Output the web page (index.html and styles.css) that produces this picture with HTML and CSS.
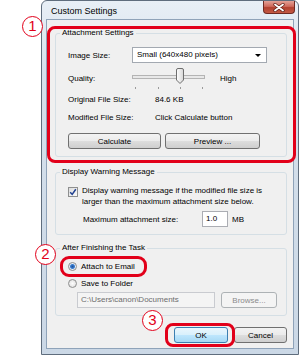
FILE: index.html
```html
<!DOCTYPE html>
<html>
<head>
  <title>Custom Settings</title>
  <link rel="stylesheet" href="styles.css">
</head>
<body>
  <div class="page">
    <div class="window">
      <div class="titlebar">
        <span class="title">Custom Settings</span>
        <span class="close">
          <svg width="12" height="9" viewBox="0 0 12 9">
            <path d="M2 1.5 L10 7.5 M10 1.5 L2 7.5" stroke="#5a1a12" stroke-width="3.2" stroke-linecap="round"/>
            <path d="M2 1.5 L10 7.5 M10 1.5 L2 7.5" stroke="#fff" stroke-width="1.8" stroke-linecap="round"/>
          </svg>
        </span>
      </div>

      <div class="client">
        <!-- Attachment settings -->
        <fieldset class="group">
          <legend>Attachment Settings</legend>
          <div class="row row-select">
            <span class="lbl-a">Image Size:</span>
            <div class="select">Small (640x480 pixels)<span class="arrow"></span></div>
          </div>
          <div class="row row-slider">
            <span class="lbl-a">Quality:</span>
            <svg class="slider" width="73" height="24" viewBox="0 0 73 24">
              <rect x="0.5" y="9.5" width="72" height="3" fill="#e8e8e8" stroke="#b4b4b4"/>
              <rect x="3" y="21" width="1" height="2" fill="#9a9a9a"/>
              <rect x="26" y="21" width="1" height="2" fill="#9a9a9a"/>
              <rect x="48" y="21" width="1" height="2" fill="#9a9a9a"/>
              <rect x="70" y="21" width="1" height="2" fill="#9a9a9a"/>
              <defs>
                <linearGradient id="thumb" x1="0" x2="1">
                  <stop offset="0" stop-color="#ffffff"/>
                  <stop offset="1" stop-color="#d6d6d6"/>
                </linearGradient>
              </defs>
              <path d="M44.5 4 Q44.5 2.5 46 2.5 H50 Q51.5 2.5 51.5 4 V14 L48 17.5 L44.5 14 Z" fill="url(#thumb)" stroke="#6e6e6e"/>
            </svg>
            <span class="high">High</span>
          </div>
          <div class="row row-text">
            <span class="lbl-b">Original File Size:</span>
            <span>84.6 KB</span>
          </div>
          <div class="row row-text row-mod">
            <span class="lbl-b">Modified File Size:</span>
            <span>Click Calculate button</span>
          </div>
          <div class="row row-buttons">
            <button class="btn btn-calc">Calculate</button>
            <button class="btn btn-preview">Preview ...</button>
          </div>
        </fieldset>

        <!-- Warning message -->
        <fieldset class="group group-warn">
          <legend>Display Warning Message</legend>
          <div class="row row-check">
            <span class="checkbox">
              <svg width="8" height="8" viewBox="0 0 8 8">
                <path d="M1.2 4.2 L3.2 6.4 L6.8 1.2" fill="none" stroke="#1f3f8f" stroke-width="1.5"/>
              </svg>
            </span>
            <span class="check-text">Display warning message if the modified file size is<br>larger than the maximum attachment size below.</span>
          </div>
          <div class="row row-max">
            <span class="lbl-max">Maximum attachment size:</span>
            <span class="input input-size">1.0</span>
            <span class="unit">MB</span>
          </div>
        </fieldset>

        <!-- After finishing -->
        <fieldset class="group group-after">
          <legend>After Finishing the Task</legend>
          <div class="row row-radio">
            <span class="radio checked"></span>
            <span>Attach to Email</span>
          </div>
          <div class="row row-radio row-radio2">
            <span class="radio"></span>
            <span>Save to Folder</span>
          </div>
          <div class="row row-path">
            <span class="input input-path">C:\Users\canon\Documents</span>
            <button class="btn btn-browse" disabled>Browse...</button>
          </div>
        </fieldset>

        <div class="footer">
          <button class="btn btn-ok">OK</button>
          <button class="btn btn-cancel">Cancel</button>
        </div>
      </div>
    </div>

    <!-- Callouts -->
    <div class="mark mark-1"></div>
    <div class="mark mark-2"></div>
    <div class="mark mark-3"></div>
    <div class="num num-1">1</div>
    <div class="num num-2">2</div>
    <div class="num num-3">3</div>
  </div>
</body>
</html>
```

FILE: styles.css
```css
body {
  margin: 0;
  background: #fff;
  font-family: "Liberation Sans", Arial, sans-serif;
  font-size: 8px;
  color: #000;
}
.page {
  position: relative;
  width: 301px;
  height: 357px;
}
.window {
  margin-left: 41px;
  width: 258px;
  height: 355px;
  box-sizing: border-box;
  border: 1px solid #5f6d7d;
  border-radius: 6px 6px 0 0;
  background: linear-gradient(#e8eff6, #d6e1ec 20%, #cbd8e6);
  padding: 0 4px 5px 4px;
  display: flex;
  flex-direction: column;
}
.titlebar {
  height: 18px;
  display: flex;
  justify-content: space-between;
  align-items: flex-start;
}
.title {
  font-size: 9px;
  padding: 5px 0 0 5px;
}
.close {
  width: 32px;
  height: 13px;
  margin-right: -1px;
  box-sizing: border-box;
  border: 1px solid #6e2a22;
  border-top: none;
  border-radius: 0 0 4px 4px;
  background: linear-gradient(#e3a197, #cf6a5c 45%, #b2402f 55%, #c45a44);
  display: flex;
  align-items: center;
  justify-content: center;
}
.client {
  flex: 1;
  border: 1px solid #8fa3b9;
  background: #f0f0f0;
  padding: 7px 6px 0 8px;
  display: flex;
  flex-direction: column;
}
.group {
  margin: 0;
  min-width: 0;
  border: 1px solid #d5dfe5;
  border-radius: 3px;
  padding: 0 8px 7px 12px;
}
.group legend {
  margin-left: -8px;
  padding: 0 2px;
  height: 12px;
  line-height: 12px;
}
.group-warn {
  margin-top: 9px;
}
.group-after {
  margin-top: 7px;
}
.row {
  display: flex;
  align-items: center;
}
.row-select {
  height: 16px;
  margin-top: 8px;
}
.lbl-a {
  width: 64px;
}
.lbl-b {
  width: 87px;
}
.select {
  position: relative;
  width: 135px;
  height: 16px;
  box-sizing: border-box;
  border: 1px solid #a3a9b1;
  background: #fff;
  padding-left: 4px;
  line-height: 14px;
}
.arrow {
  position: absolute;
  right: 5px;
  top: 6px;
  border-left: 3px solid transparent;
  border-right: 3px solid transparent;
  border-top: 3px solid #000;
}
.row-slider {
  height: 24px;
  margin-top: 3px;
}
.slider {
  display: block;
}
.high {
  margin-left: 15px;
}
.row-text {
  height: 12px;
  margin-top: 3px;
}
.row-mod {
  margin-top: 6px;
}
.row-buttons {
  margin-top: 10px;
  gap: 4px;
}
.btn {
  box-sizing: border-box;
  height: 16px;
  padding: 0;
  border: 1px solid #707070;
  border-radius: 3px;
  background: linear-gradient(#f3f3f3, #ebebeb 48%, #dddddd 52%, #cfcfcf);
  font: inherit;
  color: #000;
}
.btn-calc {
  width: 93px;
}
.btn-preview {
  width: 95px;
}
.row-check {
  margin-top: 7px;
  align-items: flex-start;
}
.checkbox {
  width: 10px;
  height: 10px;
  box-sizing: border-box;
  margin-top: 2px;
  border: 1px solid #8e8f8f;
  background: linear-gradient(135deg, #dcdcdc, #fafafa);
  display: flex;
  align-items: center;
  justify-content: center;
}
.check-text {
  margin-left: 4px;
  line-height: 11px;
}
.row-max {
  height: 16px;
  margin-top: 4px;
  padding-left: 15px;
}
.lbl-max {
  width: 119px;
}
.input {
  box-sizing: border-box;
  height: 16px;
  border: 1px solid #abadb3;
  background: #fff;
  padding-left: 3px;
  line-height: 14px;
}
.input-size {
  width: 26px;
}
.unit {
  margin-left: 4px;
}
.row-radio {
  height: 12px;
  margin-top: 6px;
}
.row-radio2 {
  margin-top: 5px;
}
.radio {
  width: 9px;
  height: 9px;
  box-sizing: border-box;
  margin-right: 4px;
  border: 1px solid #8e8f8f;
  border-radius: 50%;
  background: radial-gradient(#fdfdfd, #dadada);
}
.radio.checked {
  background: radial-gradient(circle, #1f4f9a 0, #3a7fd0 2px, #e8eef6 3px, #d9dde2);
}
.row-path {
  height: 16px;
  margin-top: 3px;
  padding-left: 9px;
}
.input-path {
  width: 138px;
  color: #6d6d6d;
  background: #f4f4f4;
  border-color: #c9cbd0;
}
.btn-browse {
  width: 56px;
  margin-left: 6px;
  color: #8b8b8b;
  border-color: #adb2b5;
  background: #f4f4f4;
}
.footer {
  display: flex;
  justify-content: flex-end;
  gap: 6px;
  margin-top: 11px;
}
.btn-ok {
  width: 54px;
  border-color: #3c7fb1;
  background: linear-gradient(#eaf6fd, #d9f0fc 48%, #bee6fd 52%, #a7d9f5);
}
.btn-cancel {
  width: 53px;
}

/* callouts over the dialog */
.mark {
  position: absolute;
  box-sizing: border-box;
  border: 3px solid #e2001a;
}
.mark-1 {
  left: 47px;
  top: 26px;
  width: 249px;
  height: 137px;
  border-radius: 8px;
}
.mark-2 {
  left: 60px;
  top: 256px;
  width: 87px;
  height: 21px;
  border-radius: 9px;
}
.mark-3 {
  left: 165px;
  top: 323px;
  width: 70px;
  height: 24px;
  border-radius: 8px;
}
.num {
  position: absolute;
  width: 21px;
  height: 21px;
  box-sizing: border-box;
  border: 1.5px solid #e2001a;
  border-radius: 50%;
  background: #fff;
  color: #e2001a;
  font-size: 15px;
  line-height: 18px;
  text-align: center;
}
.num-1 {
  left: 22px;
  top: 16px;
}
.num-2 {
  left: 35px;
  top: 244px;
}
.num-3 {
  left: 142px;
  top: 310px;
}
```
